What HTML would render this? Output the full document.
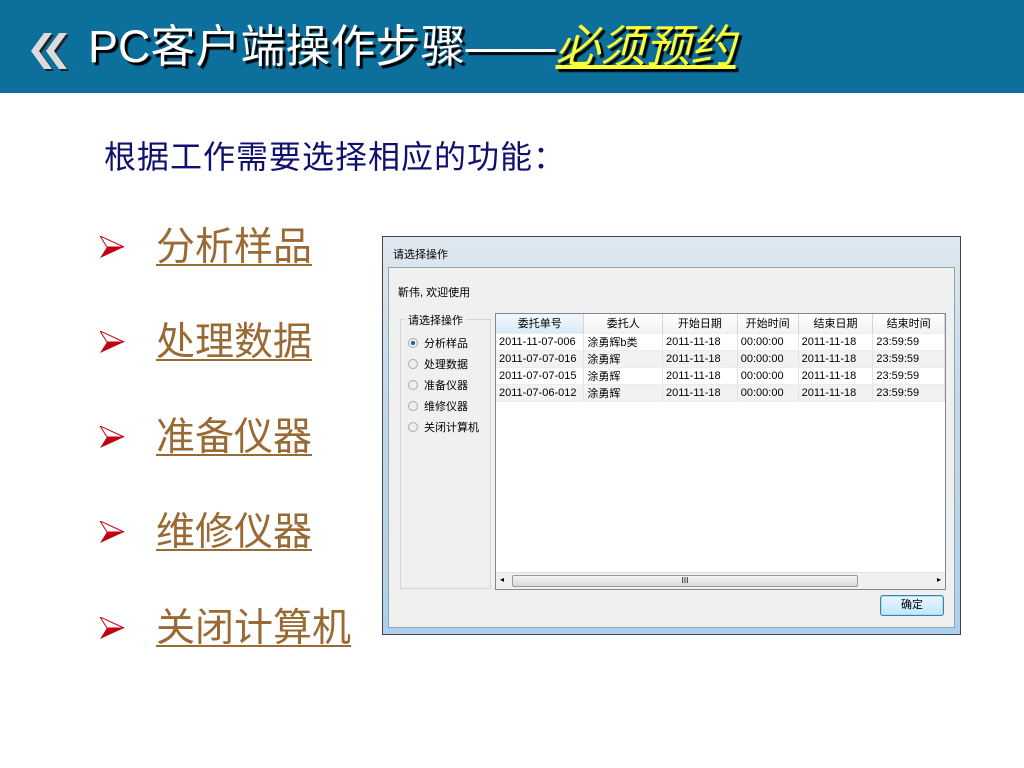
<!DOCTYPE html>
<html><head><meta charset="utf-8"><style>
*{margin:0;padding:0;box-sizing:border-box}
body{width:1024px;height:768px;background:#fff;position:relative;overflow:hidden;font-family:"Liberation Sans","Noto Sans CJK SC",sans-serif}
.hdr{position:absolute;left:0;top:0;width:1024px;height:93px;background:#0c6f9c}
.ttl{position:absolute;left:88px;top:20px;font-size:45px;color:#fff;text-shadow:3px 3px 1px #000;white-space:nowrap;line-height:54px}
.ttl i{color:#ffff33;text-decoration:underline;font-style:italic}
.sub{position:absolute;left:104px;top:138px;font-size:32px;letter-spacing:1px;color:#10106e;line-height:38px}
.item{position:absolute;left:100px;font-size:39px;color:#9a6a34;line-height:44px}
.item span{position:absolute;left:56px;top:0;text-decoration:underline;text-decoration-thickness:2px;text-underline-offset:4px;white-space:nowrap}
.item svg{position:absolute;left:0;top:10px}
.win{position:absolute;left:382px;top:236px;width:579px;height:399px;border:1px solid #444;background:linear-gradient(#dfe8f0,#c6d8ea 40%,#add0ee);font-size:11px;color:#000}
.wt{position:absolute;left:10px;top:9px;font-size:11px}
.cl{position:absolute;left:5px;top:30px;width:567px;height:361px;background:#f0f0f0;border:1px solid #8aa}
.abs{position:absolute}
.grp{position:absolute;left:11px;top:51px;width:91px;height:270px;border:1px solid #d6d6d6}
.rad{position:absolute;left:19px;font-size:11px;white-space:nowrap}
.rad b{display:inline-block;width:10px;height:10px;border-radius:50%;border:1px solid #aaa;background:#eee;margin-right:6px;vertical-align:-1px}
.tbl{position:absolute;left:106px;top:45px;width:451px;height:277px;border:1px solid #828790;background:#fff}
table{border-collapse:collapse;font-size:11px;position:absolute;left:0;top:0}
td{height:17px;border-right:1px solid #e2e2e2;border-bottom:1px solid #ececec;padding:0 3px;white-space:nowrap}
tr.h td{background:linear-gradient(#fff,#f0f2f5);text-align:center;height:19px;border-right:1px solid #d5d5d5}
tr:nth-child(odd):not(.h) td{background:#f2f2f2}
.sb{position:absolute;left:0;bottom:0;width:449px;height:17px;background:#f0f0f0;border-top:1px solid #e0e0e0}
.th{position:absolute;left:16px;top:2px;width:346px;height:12px;border:1px solid #999;border-radius:2px;background:linear-gradient(#f4f4f4,#d8d8d8);text-align:center;font-size:8px;line-height:10px}
.btn{position:absolute;left:491px;top:327px;width:64px;height:21px;border:1px solid #3c7fb1;border-radius:3px;background:linear-gradient(#eaf6fd,#bee6fd);text-align:center;line-height:19px;font-size:11px;box-shadow:inset 0 0 0 1px #a8dcf8}
</style></head><body>
<div class="hdr">
<svg class="abs" style="left:29px;top:31px" width="44" height="42" viewBox="0 0 44 42">
<g fill="#222"><polygon points="17,4 25,4 12,22 25,40 17,40 4,22"/><polygon points="32,4 40,4 27,22 40,40 32,40 19,22"/></g>
<g fill="#dcdcdc"><polygon points="15,2 23,2 10,20 23,38 15,38 2,20"/><polygon points="30,2 38,2 25,20 38,38 30,38 17,20"/></g>
</svg>
<div class="ttl">PC客户端操作步骤——<i>必须预约</i></div>
</div>
<div class="sub">根据工作需要选择相应的功能：</div>
<div class="item" style="top:226px"><svg width="26" height="22" viewBox="0 0 26 22"><polygon points="0,0 24,11 0,22 7,11" fill="#c00010"/><polygon points="0,0 24,11 7,11" fill="#fff" stroke="#c00010" stroke-width="1"/></svg><span>分析样品</span></div>
<div class="item" style="top:321px"><svg width="26" height="22" viewBox="0 0 26 22"><polygon points="0,0 24,11 0,22 7,11" fill="#c00010"/><polygon points="0,0 24,11 7,11" fill="#fff" stroke="#c00010" stroke-width="1"/></svg><span>处理数据</span></div>
<div class="item" style="top:416px"><svg width="26" height="22" viewBox="0 0 26 22"><polygon points="0,0 24,11 0,22 7,11" fill="#c00010"/><polygon points="0,0 24,11 7,11" fill="#fff" stroke="#c00010" stroke-width="1"/></svg><span>准备仪器</span></div>
<div class="item" style="top:511px"><svg width="26" height="22" viewBox="0 0 26 22"><polygon points="0,0 24,11 0,22 7,11" fill="#c00010"/><polygon points="0,0 24,11 7,11" fill="#fff" stroke="#c00010" stroke-width="1"/></svg><span>维修仪器</span></div>
<div class="item" style="top:607px"><svg width="26" height="22" viewBox="0 0 26 22"><polygon points="0,0 24,11 0,22 7,11" fill="#c00010"/><polygon points="0,0 24,11 7,11" fill="#fff" stroke="#c00010" stroke-width="1"/></svg><span>关闭计算机</span></div>

<div class="win">
<div class="wt">请选择操作</div>
<div class="cl">
<div class="abs" style="left:9px;top:16px">靳伟, 欢迎使用</div>
<div class="grp"></div>
<div class="abs" style="left:16px;top:44px;background:#f0f0f0;padding:0 3px">请选择操作</div>
<div class="rad" style="top:67px"><b style="background:radial-gradient(#2a5fb8 35%,#eee 40%)"></b>分析样品</div>
<div class="rad" style="top:88px"><b></b>处理数据</div>
<div class="rad" style="top:109px"><b></b>准备仪器</div>
<div class="rad" style="top:130px"><b></b>维修仪器</div>
<div class="rad" style="top:151px"><b></b>关闭计算机</div>
<div class="tbl">
<table>
<tr class="h"><td style="width:88px;background:linear-gradient(#f2f8fd,#d8ecf8)">委托单号</td><td style="width:79px">委托人</td><td style="width:75px">开始日期</td><td style="width:61px">开始时间</td><td style="width:75px">结束日期</td><td style="width:72px">结束时间</td></tr>
<tr><td>2011-11-07-006</td><td>涂勇辉b类</td><td>2011-11-18</td><td>00:00:00</td><td>2011-11-18</td><td>23:59:59</td></tr>
<tr><td>2011-07-07-016</td><td>涂勇辉</td><td>2011-11-18</td><td>00:00:00</td><td>2011-11-18</td><td>23:59:59</td></tr>
<tr><td>2011-07-07-015</td><td>涂勇辉</td><td>2011-11-18</td><td>00:00:00</td><td>2011-11-18</td><td>23:59:59</td></tr>
<tr><td>2011-07-06-012</td><td>涂勇辉</td><td>2011-11-18</td><td>00:00:00</td><td>2011-11-18</td><td>23:59:59</td></tr>
</table>
<div class="sb"><span class="abs" style="left:4px;top:2px;font-size:8px">◂</span><div class="th">III</div><span class="abs" style="right:4px;top:2px;font-size:8px">▸</span></div>
</div>
<div class="btn">确定</div>
</div>
</div>
</body></html>
